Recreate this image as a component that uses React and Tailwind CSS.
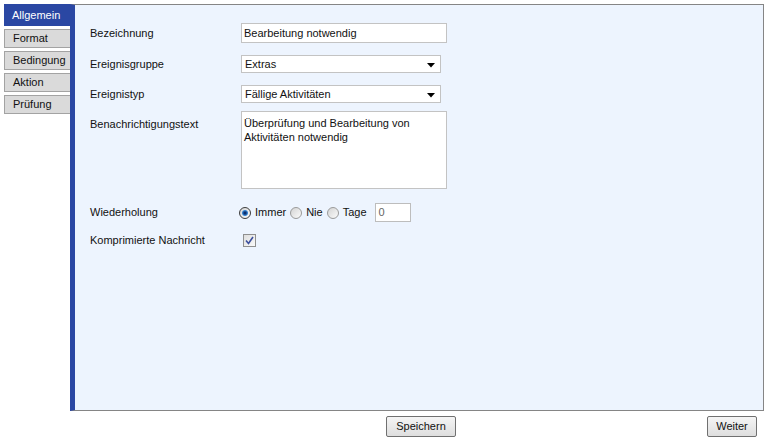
import { useState } from 'react';

const tabs = ['Allgemein', 'Format', 'Bedingung', 'Aktion', 'Prüfung'];

const Caret = () => (
  <svg width="8" height="5" viewBox="0 0 8 5" className="mr-[5px] mt-[3px]">
    <path d="M0 0 H8 L4 4.5 Z" fill="#000" />
  </svg>
);

const Select = ({ value, width }) => (
  <div className={`flex h-[18px] ${width} items-center justify-between border border-[#c3c3c3] bg-white pl-[3px]`}>
    <span>{value}</span>
    <Caret />
  </div>
);

const Radio = ({ checked, label }) => (
  <label className="flex items-center gap-[4px]">
    <span
      className={`flex h-[12px] w-[12px] items-center justify-center rounded-full border ${
        checked ? 'border-[#3d3d3d]' : 'border-[#9a9a9a]'
      } bg-gradient-to-br from-[#d4d4d4] to-[#fbfbfb]`}
    >
      {checked && <span className="h-[6px] w-[6px] rounded-full bg-[radial-gradient(circle,#0d2f6e_20%,#2f7fd0_60%,#8cc3f0_100%)]" />}
    </span>
    <span>{label}</span>
  </label>
);

const Row = ({ label, children, className = '' }) => (
  <div className={`flex ${className}`}>
    <div className="w-[151px] shrink-0">{label}</div>
    {children}
  </div>
);

export default function App() {
  const [tab] = useState('Allgemein');

  return (
    <div className="h-[442px] w-[771px] bg-white text-[11px] text-[#111] font-['Liberation_Sans',Arial,sans-serif]">
      <div className="flex pt-[4px]">
        {/* tab column */}
        <div className="flex w-[70px] flex-col gap-[3px] pl-[4px]">
          {tabs.map((t) =>
            t === tab ? (
              <div key={t} className="flex h-[22px] items-center bg-[#2a47a3] pl-[8px] text-white">
                {t}
              </div>
            ) : (
              <div
                key={t}
                className="flex h-[19px] items-center border border-[#a3a3a3] border-r-0 bg-[#dadada] pl-[8px] text-[#111]"
              >
                {t}
              </div>
            )
          )}
        </div>

        {/* panel */}
        <div className="h-[407px] w-[694px] border border-l-[5px] border-[#858585] border-l-[#2a47a3] bg-[#edf4fe] pl-[15px]">
          <Row label="Bezeichnung" className="mt-[18px] h-[20px] items-center">
            <div className="flex h-[20px] w-[206px] items-center border border-[#c3c3c3] bg-white pl-[2px]">
              Bearbeitung notwendig
            </div>
          </Row>

          <Row label="Ereignisgruppe" className="mt-[12px] h-[18px] items-center">
            <Select value="Extras" width="w-[200px]" />
          </Row>

          <Row label="Ereignistyp" className="mt-[12px] h-[18px] items-center">
            <Select value="Fällige Aktivitäten" width="w-[200px]" />
          </Row>

          <Row label={<div className="pt-[5px]">Benachrichtigungstext</div>} className="mt-[8px] items-start">
            <div className="h-[78px] w-[206px] border border-[#c3c3c3] bg-white px-[2px] pt-[4px] leading-[14px]">
              Überprüfung und Bearbeitung von
              <br />
              Aktivitäten notwendig
            </div>
          </Row>

          <Row label="Wiederholung" className="mt-[14px] h-[19px] items-center">
            <div className="-ml-[2px] flex items-center gap-[4px]">
              <Radio checked label="Immer" />
              <Radio label="Nie" />
              <Radio label="Tage" />
              <div className="ml-[4px] flex h-[19px] w-[36px] items-center border border-[#bdbdbd] bg-white pl-[3px] text-[#666]">
                0
              </div>
            </div>
          </Row>

          <Row label="Komprimierte Nachricht" className="mt-[10px] h-[16px] items-center">
            <span className="ml-[2px] flex h-[13px] w-[13px] items-center justify-center border border-[#8f8f8f] bg-gradient-to-br from-[#dedede] to-[#fafafa]">
              <svg width="9" height="9" viewBox="0 0 9 9">
                <path d="M1 4.5 L3.5 7.5 L8 1" fill="none" stroke="#3b4f9e" strokeWidth="1.6" />
              </svg>
            </span>
          </Row>
        </div>
      </div>

      {/* buttons */}
      <div className="mt-[5px] flex items-center pr-[14px]">
        <button className="ml-[386px] h-[21px] w-[70px] rounded-[2px] border border-[#707070] bg-gradient-to-b from-[#f5f5f5] to-[#dedede] text-[11px] text-[#111]">
          Speichern
        </button>
        <button className="ml-auto h-[21px] w-[50px] rounded-[2px] border border-[#707070] bg-gradient-to-b from-[#f5f5f5] to-[#dedede] text-[11px] text-[#111]">
          Weiter
        </button>
      </div>
    </div>
  );
}
